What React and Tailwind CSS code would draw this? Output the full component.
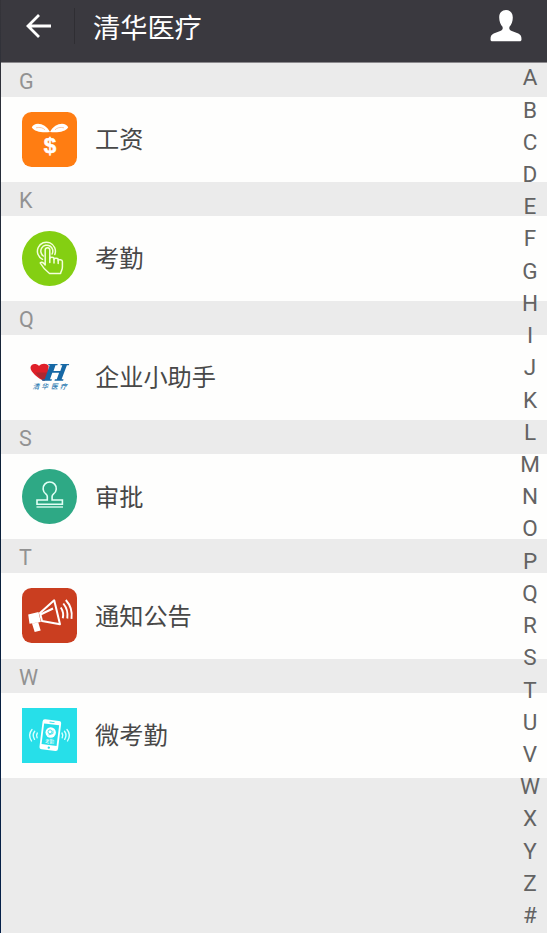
const SalaryIcon = () => (
  <svg viewBox="0 0 55 55" className="size-[55px]">
    <rect width="55" height="55" rx="9.5" fill="#ff7d12" />
    <path
      d="M28 20C25 14.500 20.500 11.800 16 11.800c-3 0-5 1.500-6.200 3.400C12 19.500 20 21 28 20ZM28 20C31 14.500 35.500 11.800 40 11.800c3 0 5 1.500 6.200 3.400C44 19.500 36 21 28 20Z"
      fill="#fff"
    />
    <path
      d="M14 15.800c4-1 7 0 9 2M42 15.800c-4-1-7 0-9 2"
      fill="none"
      stroke="#ffb889"
      strokeWidth=".8"
    />
    <text
      x="28"
      y="41"
      textAnchor="middle"
      fontSize="22.500"
      fontWeight="700"
      fill="#fff"
      stroke="#fff"
      strokeWidth=".5"
      fontFamily="Liberation Sans, sans-serif"
    >
      $
    </text>
  </svg>
);

const AttendanceIcon = () => (
  <svg viewBox="0 0 55 55" className="size-[55px]">
    <circle cx="27.500" cy="27.500" r="27.500" fill="#84cf12" />
    <g fill="none" stroke="#f4ffdc" strokeWidth="1.500" strokeLinejoin="round" strokeLinecap="round">
      <path d="M20.500 28.300a9 9 0 1 1 12.300-4.800" />
      <path d="M21.300 25a6 6 0 1 1 8.800-2" />
      <path
        d="M23.200 34V19a2.300 2.300 0 0 1 4.600 0v8.500c0-1.800 4.200-1.800 4.200 0v1c0-1.800 4.200-1.600 4.200.2v1c0-1.600 4.200-1.400 4.200.8V36c0 3.500-1.500 3.800-1.800 6.500H27.500c-4-3-7-6.500-9.300-10.500 1.500-1.800 3.300-.3 5 2Z"
        fill="#84cf12"
      />
      <path d="M27.800 27v4.500M32 28v4M36.200 29v3.500" />
    </g>
  </svg>
);

const HelperIcon = () => (
  <svg viewBox="0 0 55 55" className="size-[55px]">
    <path
      d="M22 31C16 28.500 8.500 22 8.500 17.800c0-4.300 5.800-5 8.500-1.800 2.500-3 8-3 9.700.2L26 22Z"
      fill="#df2029"
    />
    <path d="M13.500 22.500h14L22.500 31C19 29.500 16 26 13.500 22.500Z" fill="#ad2830" />
    <path
      d="M26.500 14h9.200l-.4 1.300h-1.800l-2 5.700h6.800l2-5.700h-2l.4-1.300h8.500l-.4 1.300h-1.900L39.600 29.300h1.900l-.4 1.400h-8.600l.4-1.400h1.900l2.300-6.500h-6.800l-2.300 6.500h1.900l-.4 1.400h-9.500l.4-1.400h2.300l5-14h-1.600Z"
      fill="#1668a5"
    />
    <g
      fontSize="6.800"
      fontStyle="italic"
      fontWeight="500"
      fill="#2878b0"
      textAnchor="middle"
      fontFamily="Noto Sans CJK SC, sans-serif"
    >
      <text x="14" y="39.200">清</text>
      <text x="22.700" y="39.200">华</text>
      <text x="32.500" y="39.200">医</text>
      <text x="41.300" y="39.200">疗</text>
    </g>
  </svg>
);

const ApprovalIcon = () => (
  <svg viewBox="0 0 55 55" className="size-[55px]">
    <circle cx="27.500" cy="27.500" r="27.500" fill="#2ea985" />
    <g fill="none" stroke="#e2fff5" strokeWidth="1.600">
      <path d="M25.300 31v-3.500c0-1.500-.5-1.800-1.500-2.600a6.600 6.600 0 1 1 7.800 0c-1 .8-1.500 1.100-1.500 2.600V31h10.300v4.200H15V31Z" />
      <path d="M14.500 38h26.500" strokeWidth="1.800" stroke="#b5e8d7" />
    </g>
  </svg>
);

const NoticeIcon = () => (
  <svg viewBox="0 0 55 55" className="size-[55px]">
    <rect width="55" height="55" rx="9.500" fill="#ca3e20" />
    <path d="M6.200 26.500 16.500 24l2.300 10L7.500 35.700ZM10 35.500l6.300-1 2.400 8-6 1.500Z" fill="#fff" />
    <g fill="none" stroke="#fff">
      <path d="M18 25 32.200 12.300 38 36.300 20 33Z" strokeWidth="2" strokeLinejoin="round" />
      <path d="m18.500 26.500 12.500-6" strokeWidth="2" />
      <path
        d="M38.800 19.500c2.200 3.300 2.900 7 2 10.800M41.300 15.500c3.700 4.500 4.800 9.500 4 15M43.800 12c5 5.500 6.700 12 5.700 18.800"
        strokeWidth="1.900"
      />
    </g>
  </svg>
);

const MobileAttendanceIcon = () => (
  <svg viewBox="0 0 55 55" className="size-[55px]">
    <rect width="55" height="55" fill="#27dfe9" />
    <g transform="rotate(7 28.300 26.800)">
      <rect x="19" y="12" width="18.700" height="30.200" rx="2.500" fill="#fff" />
      <rect x="20.800" y="16.300" width="15.100" height="20.800" fill="#27dfe9" />
      <path d="M26 14.200h5" stroke="#27dfe9" strokeWidth="1" />
      <circle cx="28.400" cy="39.700" r="1.200" fill="#27dfe9" />
    </g>
    <circle cx="28.700" cy="24.500" r="5.200" fill="#fff" />
    <circle cx="28" cy="23.800" r="2" fill="none" stroke="#27dfe9" strokeWidth=".9" />
    <path d="m26.500 27 4.500-1.500v-3" fill="none" stroke="#27dfe9" strokeWidth=".8" />
    <text
      x="27.500"
      y="34.800"
      textAnchor="middle"
      fontSize="4.500"
      fill="#fff"
      fontFamily="Noto Sans CJK SC, sans-serif"
    >
      考勤
    </text>
    <path
      d="M10 21.500c-3 3.500-3 7.500-.5 11.500M12.700 23.300c-2 2.500-2 5-.2 8M15.300 25c-1 1.500-1 3-.2 4.800M45 21.500c3 3.500 3 7.500.5 11.500M42.500 23.300c2 2.500 2 5 .2 8M40 25c1 1.500 1 3 .2 4.800"
      fill="none"
      stroke="#d8ffff"
      strokeWidth="1.400"
      strokeLinecap="round"
    />
  </svg>
);

const sections = [
  { letter: "G", name: "工资", Icon: SalaryIcon },
  { letter: "K", name: "考勤", Icon: AttendanceIcon },
  { letter: "Q", name: "企业小助手", Icon: HelperIcon },
  { letter: "S", name: "审批", Icon: ApprovalIcon },
  { letter: "T", name: "通知公告", Icon: NoticeIcon },
  { letter: "W", name: "微考勤", Icon: MobileAttendanceIcon },
];

const indexLetters = "ABCDEFGHIJKLMNOPQRSTUVWXYZ#".split("");

const Header = () => (
  <header className="flex h-[62.600px] items-start border-b border-[#8b898d] bg-[#3a393f] text-white">
    <svg
      viewBox="0 0 26 26"
      className="mt-[13px] ml-6 size-[26px]"
      fill="none"
      stroke="#fff"
      strokeWidth="2.800"
    >
      <path d="M14 2 3 13l11 11M3 13H26" />
    </svg>
    <div className="mt-2 ml-[23px] h-9 w-px bg-[#2f2e33]" />
    <h1 className="mt-[11px] ml-[18px] flex-1 text-[27.200px] leading-9">清华医疗</h1>
    <svg viewBox="0 0 32 32" className="mt-[10px] mr-[25px] size-8" fill="#fff">
      <path d="M16 0c4 0 6.800 2.800 6.800 7.500 0 4-1.300 7-3.300 9.300-.6 2.200 0 3.200 2.300 4.100l6.500 2.700c2.200 1 3.200 2.600 3.200 5.600 0 1.400-.6 2-2 2h-27c-1.400 0-2-.6-2-2 0-3 1-4.600 3.200-5.600l6.500-2.700c2.300-.9 2.900-1.900 2.300-4.100-2-2.300-3.300-5.300-3.300-9.300C9.200 2.800 12 0 16 0Z" />
    </svg>
  </header>
);

const App = () => {
  return (
    <div className="flex h-[933px] w-[547px] overflow-hidden bg-[#ebebeb] font-['Roboto','Noto_Sans_CJK_SC',sans-serif]">
      <div className="w-px shrink-0 bg-linear-to-b from-[#353439] via-[#0c2038] to-[#05204a]" />
      <div className="relative min-w-0 flex-1">
        <Header />
        <main>
          {sections.map(({ letter, name, Icon }) => (
            <section key={letter}>
              <h2 className="h-[34px] pt-px pl-[18px] text-[21.500px] leading-[35px] text-[#929292]">
                {letter}
              </h2>
              <div className="flex h-[85.200px] items-center gap-[18px] bg-[#fefefd] pl-[21px]">
                <Icon />
                <span className="pt-0.5 text-[24.200px] text-[#484848]">{name}</span>
              </div>
            </section>
          ))}
        </main>
        <nav className="absolute top-[61.400px] right-0 flex w-[34px] flex-col text-center text-[22.500px] text-[#636363]">
          {indexLetters.map((letter) => (
            <span key={letter} className="h-[32.230px] leading-[32.230px]">
              {letter}
            </span>
          ))}
        </nav>
      </div>
    </div>
  );
};

export default App;
